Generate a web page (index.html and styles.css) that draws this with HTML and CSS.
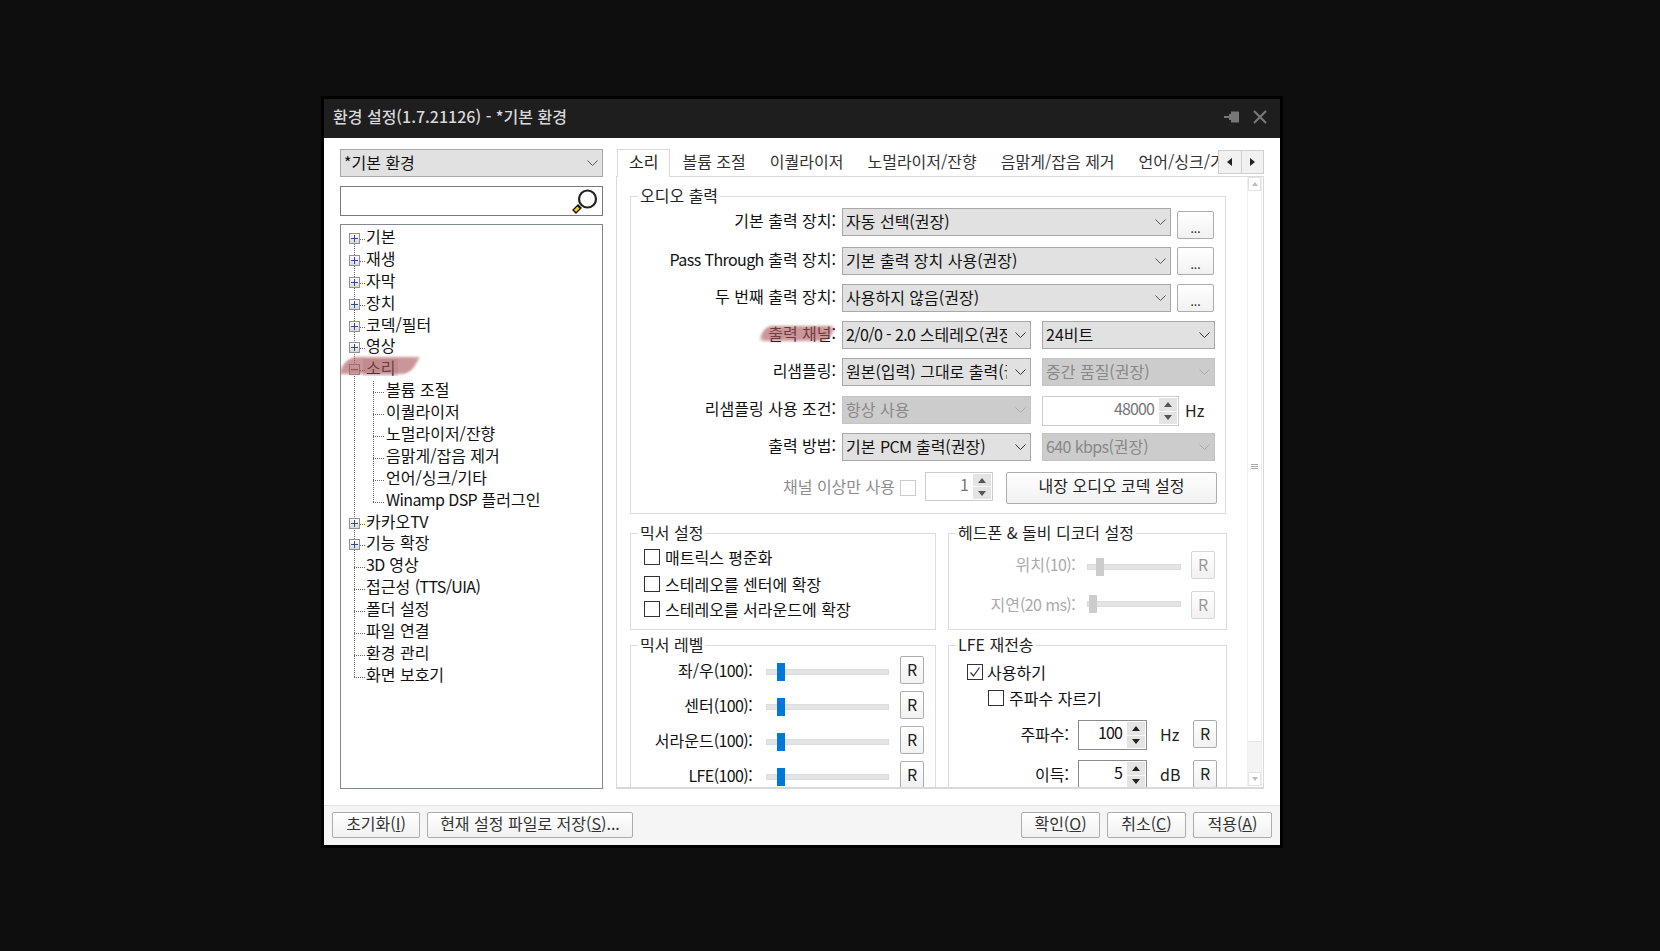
FILE: index.html
```html
<!DOCTYPE html>
<html lang="ko">
<head>
    <meta charset="UTF-8">
    <meta name="viewport" content="width=device-width, initial-scale=1.0">
    <title>환경 설정</title>
    <link rel="stylesheet" href="styles.css">
</head>
<body>

<div class="window">

    <header class="titlebar">
        <span class="title">환경 설정(1.7.21126) - *기본 환경</span>
        <svg class="pin" width="15" height="12" viewBox="0 0 15 12"><path d="M0 5h5V3h2V.5h8v11H7V9H5V7H0z" fill="#777"/></svg>
        <svg class="close" width="14" height="14" viewBox="0 0 14 14"><path d="M1 1l12 12M13 1L1 13" stroke="#777" stroke-width="2.200" fill="none"/></svg>
    </header>

    <div class="main">

        <!-- 왼쪽: 프로필, 검색, 트리 -->
        <div class="side">
            <div class="combo side-combo">
                <span class="combo-text">*기본 환경</span>
                <svg class="chev" width="11" height="6" viewBox="0 0 11 6"><path d="M.5.500l5 5 5-5" fill="none" stroke="#555"/></svg>
            </div>
            <div class="search">
                <svg width="26" height="25" viewBox="0 0 26 25">
                    <path d="M8 17l-6 6" stroke="#111" stroke-width="5.500" fill="none"/>
                    <path d="M6.500 18.500l-3.500 3.500" stroke="#f5cf00" stroke-width="3" fill="none"/>
                    <circle cx="15.500" cy="10" r="8.500" fill="#fff" stroke="#222" stroke-width="2.200"/>
                </svg>
            </div>
            <div class="tree">
                <ul class="tree-root">
                    <li class="node"><i class="exp"></i>기본</li>
                    <li class="node"><i class="exp"></i>재생</li>
                    <li class="node"><i class="exp"></i>자막</li>
                    <li class="node"><i class="exp"></i>장치</li>
                    <li class="node"><i class="exp"></i>코덱/필터</li>
                    <li class="node"><i class="exp"></i>영상</li>
                    <li class="node open"><i class="exp minus"></i><span class="selected">소리</span><span class="brush brush-tree"></span></li>
                    <li>
                        <ul class="tree-sub">
                            <li class="node">볼륨 조절</li>
                            <li class="node">이퀄라이저</li>
                            <li class="node">노멀라이저/잔향</li>
                            <li class="node">음맑게/잡음 제거</li>
                            <li class="node">언어/싱크/기타</li>
                            <li class="node"><span class="en">Winamp DSP</span> 플러그인</li>
                        </ul>
                    </li>
                    <li class="node"><i class="exp"></i>카카오<span class="en">TV</span></li>
                    <li class="node"><i class="exp"></i>기능 확장</li>
                    <li class="node"><span class="en">3D</span> 영상</li>
                    <li class="node">접근성 <span class="en">(TTS/UIA)</span></li>
                    <li class="node">폴더 설정</li>
                    <li class="node">파일 연결</li>
                    <li class="node">환경 관리</li>
                    <li class="node">화면 보호기</li>
                </ul>
            </div>
        </div>

        <!-- 오른쪽: 탭 -->
        <div class="content">
            <div class="tabs">
                <span class="tab active">소리</span>
                <span class="tab">볼륨 조절</span>
                <span class="tab">이퀄라이저</span>
                <span class="tab">노멀라이저/잔향</span>
                <span class="tab">음맑게/잡음 제거</span>
                <span class="tab">언어/싱크/기타</span>
                <div class="tab-scroll">
                    <span class="tab-btn"><i class="tri-left"></i></span>
                    <span class="tab-btn"><i class="tri-right"></i></span>
                </div>
            </div>

            <div class="pane">
                <div class="pane-body">

                    <div class="group audio">
                        <span class="group-title">오디오 출력</span>
                        <div class="audio-rows">
                            <div class="row">
                                <label class="lbl">기본 출력 장치:</label>
                                <div class="combo wide"><span class="combo-text">자동 선택(권장)</span><svg class="chev" width="11" height="6" viewBox="0 0 11 6"><path d="M.5.500l5 5 5-5" fill="none" stroke="#555"/></svg></div>
                                <button class="btn dots dots-low">...</button>
                            </div>
                            <div class="row">
                                <label class="lbl"><span class="en">Pass Through</span> 출력 장치:</label>
                                <div class="combo wide"><span class="combo-text">기본 출력 장치 사용(권장)</span><svg class="chev" width="11" height="6" viewBox="0 0 11 6"><path d="M.5.500l5 5 5-5" fill="none" stroke="#555"/></svg></div>
                                <button class="btn dots">...</button>
                            </div>
                            <div class="row">
                                <label class="lbl">두 번째 출력 장치:</label>
                                <div class="combo wide"><span class="combo-text">사용하지 않음(권장)</span><svg class="chev" width="11" height="6" viewBox="0 0 11 6"><path d="M.5.500l5 5 5-5" fill="none" stroke="#555"/></svg></div>
                                <button class="btn dots">...</button>
                            </div>
                            <div class="row">
                                <label class="lbl"><span class="brush brush-label"></span>출력 채널:</label>
                                <div class="combo half"><span class="combo-text"><span class="en">2/0/0 - 2.0</span> 스테레오(권장)</span><svg class="chev" width="11" height="6" viewBox="0 0 11 6"><path d="M.5.500l5 5 5-5" fill="none" stroke="#333"/></svg></div>
                                <div class="combo side-half"><span class="combo-text">24비트</span><svg class="chev" width="11" height="6" viewBox="0 0 11 6"><path d="M.5.500l5 5 5-5" fill="none" stroke="#333"/></svg></div>
                            </div>
                            <div class="row">
                                <label class="lbl">리샘플링:</label>
                                <div class="combo half"><span class="combo-text">원본(입력) 그대로 출력(권장)</span><svg class="chev" width="11" height="6" viewBox="0 0 11 6"><path d="M.5.500l5 5 5-5" fill="none" stroke="#333"/></svg></div>
                                <div class="combo side-half off"><span class="combo-text">중간 품질(권장)</span><svg class="chev" width="11" height="6" viewBox="0 0 11 6"><path d="M.5.500l5 5 5-5" fill="none" stroke="#aaa"/></svg></div>
                            </div>
                            <div class="row">
                                <label class="lbl">리샘플링 사용 조건:</label>
                                <div class="combo half off"><span class="combo-text">항상 사용</span><svg class="chev" width="11" height="6" viewBox="0 0 11 6"><path d="M.5.500l5 5 5-5" fill="none" stroke="#aaa"/></svg></div>
                                <div class="spin spin-rate off"><span class="spin-val">48000</span><span class="spin-btns"><i class="up"></i><i class="down"></i></span></div>
                                <span class="unit">Hz</span>
                            </div>
                            <div class="row">
                                <label class="lbl">출력 방법:</label>
                                <div class="combo half"><span class="combo-text">기본 <span class="en">PCM</span> 출력(권장)</span><svg class="chev" width="11" height="6" viewBox="0 0 11 6"><path d="M.5.500l5 5 5-5" fill="none" stroke="#333"/></svg></div>
                                <div class="combo side-half off"><span class="combo-text"><span class="en">640 kbps</span>(권장)</span><svg class="chev" width="11" height="6" viewBox="0 0 11 6"><path d="M.5.500l5 5 5-5" fill="none" stroke="#aaa"/></svg></div>
                            </div>
                            <div class="row">
                                <label class="lbl lbl-off">채널 이상만 사용</label>
                                <i class="check check-off"></i>
                                <div class="spin spin-ch off"><span class="spin-val">1</span><span class="spin-btns"><i class="up"></i><i class="down"></i></span></div>
                                <button class="btn codec">내장 오디오 코덱 설정</button>
                            </div>
                        </div>
                    </div>

                    <div class="group-grid">
                        <div class="group mixer">
                            <span class="group-title">믹서 설정</span>
                            <div class="check-row first"><i class="check"></i>매트릭스 평준화</div>
                            <div class="check-row second"><i class="check"></i>스테레오를 센터에 확장</div>
                            <div class="check-row third"><i class="check"></i>스테레오를 서라운드에 확장</div>
                        </div>

                        <div class="group phones">
                            <span class="group-title">헤드폰 &amp; 돌비 디코더 설정</span>
                            <div class="phone-row">
                                <label class="phone-lbl">위치<span class="en">(10):</span></label>
                                <div class="slider phone-slider"><i class="thumb gray pos-a"></i></div>
                                <button class="btn reset off">R</button>
                            </div>
                            <div class="phone-row">
                                <label class="phone-lbl">지연<span class="en">(20 ms):</span></label>
                                <div class="slider phone-slider raised"><i class="thumb gray pos-b"></i></div>
                                <button class="btn reset off">R</button>
                            </div>
                        </div>

                        <div class="group levels">
                            <span class="group-title">믹서 레벨</span>
                            <div class="level-row"><label class="level-lbl">좌/우<span class="en">(100):</span></label><div class="slider level-slider"><i class="thumb"></i></div><button class="btn reset">R</button></div>
                            <div class="level-row"><label class="level-lbl">센터<span class="en">(100):</span></label><div class="slider level-slider"><i class="thumb"></i></div><button class="btn reset">R</button></div>
                            <div class="level-row"><label class="level-lbl">서라운드<span class="en">(100):</span></label><div class="slider level-slider"><i class="thumb"></i></div><button class="btn reset">R</button></div>
                            <div class="level-row"><label class="level-lbl"><span class="en">LFE(100):</span></label><div class="slider level-slider"><i class="thumb"></i></div><button class="btn reset">R</button></div>
                        </div>

                        <div class="group lfe">
                            <span class="group-title">LFE 재전송</span>
                            <div class="check-row lfe-use"><i class="check on"><svg width="12" height="12" viewBox="0 0 12 12"><path d="M1.500 6.500l3 3.500 6-8.500" fill="none" stroke="#333" stroke-width="1.300"/></svg></i>사용하기</div>
                            <div class="check-row lfe-cut"><i class="check"></i>주파수 자르기</div>
                            <div class="lfe-row">
                                <label class="lfe-lbl">주파수:</label>
                                <div class="spin spin-lfe"><span class="spin-val">100</span><span class="spin-btns"><i class="up"></i><i class="down"></i></span></div>
                                <span class="unit lfe-unit">Hz</span>
                                <button class="btn reset">R</button>
                            </div>
                            <div class="lfe-row">
                                <label class="lfe-lbl">이득:</label>
                                <div class="spin spin-lfe"><span class="spin-val">5</span><span class="spin-btns"><i class="up"></i><i class="down"></i></span></div>
                                <span class="unit lfe-unit">dB</span>
                                <button class="btn reset">R</button>
                            </div>
                        </div>
                    </div>

                </div>

                <div class="scrollbar">
                    <span class="sb-arrow"><i class="sb-up"></i></span>
                    <span class="sb-thumb"><i class="sb-grip"></i></span>
                    <span class="sb-rest"></span>
                    <span class="sb-arrow"><i class="sb-down"></i></span>
                </div>
            </div>
        </div>
    </div>

    <footer class="footer">
        <button class="btn foot foot-reset">초기화(<u>I</u>)</button>
        <button class="btn foot foot-save">현재 설정 파일로 저장(<u>S</u>)...</button>
        <span class="foot-gap"></span>
        <button class="btn foot foot-act">확인(<u>O</u>)</button>
        <button class="btn foot foot-act">취소(<u>C</u>)</button>
        <button class="btn foot foot-act">적용(<u>A</u>)</button>
    </footer>

</div>

</body>
</html>
```

FILE: styles.css
```css
* {
    box-sizing: border-box;
}

body {
    margin: 0;
    padding: 96px 0 0 321px;
    height: 951px;
    overflow: hidden;
    background-color: #0e0e0e;
    font-family: "Noto Sans CJK KR", "Noto Sans", sans-serif;
    font-size: 16px;
    color: #111;
}

.en {
    letter-spacing: -0.6px;
}

.window {
    width: 962px;
    height: 752px;
    border: 3px solid #000;
    background-color: #fff;
    display: flex;
    flex-direction: column;
}

/* 제목 표시줄 */
.titlebar {
    height: 39px;
    flex: none;
    background-color: #1e1e1e;
    display: flex;
    align-items: center;
    padding: 0 13px 3px 9px;
}

.title {
    flex: 1;
    color: #d8d8d8;
    font-size: 16px;
    font-weight: 500;
    line-height: 20px;
    padding-bottom: 2px;
}

.pin {
    margin-right: 14px;
}

.main {
    flex: 1;
    display: flex;
    gap: 13px;
    padding: 11px 16px 0;
}

/* 왼쪽 */
.side {
    width: 263px;
    flex: none;
}

.combo {
    height: 28px;
    border: 1px solid #a8a8a8;
    background-color: #e1e1e1;
    display: flex;
    align-items: center;
    padding: 0 4px 0 3px;
    flex: none;
}

.combo-text {
    flex: 1;
    min-width: 0;
    overflow: hidden;
    white-space: nowrap;
    line-height: 24px;
    height: 26px;
}

.chev {
    flex: none;
    margin-left: 8px;
}

.combo.off {
    background-color: #ccc;
    border-color: #c4c4c4;
    color: #888;
}

.side-combo {
    width: 263px;
}

.search {
    height: 30px;
    margin-top: 9px;
    border: 1px solid #7a7a7a;
    display: flex;
    justify-content: flex-end;
    align-items: center;
    padding-right: 4px;
}

.tree {
    height: 565px;
    margin-top: 8px;
    border: 1px solid #828790;
    padding-top: 3px;
    overflow: hidden;
}

.tree ul {
    list-style: none;
    margin: 0;
    padding: 0;
    position: relative;
}

.tree-root::before {
    content: "";
    position: absolute;
    left: 13px;
    top: 11px;
    bottom: 11px;
    border-left: 1px dotted #666;
}

.tree-sub::before {
    content: "";
    position: absolute;
    left: 32px;
    top: 0;
    bottom: 11px;
    border-left: 1px dotted #666;
}

.node {
    height: 21.9px;
    line-height: 17px;
    padding-left: 25px;
    position: relative;
    white-space: nowrap;
}

.tree-sub .node {
    padding-left: 45px;
}

.node::after {
    content: "";
    position: absolute;
    left: 13px;
    top: 11px;
    width: 11px;
    border-top: 1px dotted #666;
}

.tree-sub .node::after {
    left: 32px;
}

.exp {
    position: absolute;
    left: 8px;
    top: 5px;
    width: 11px;
    height: 11px;
    border: 1px solid #919191;
    background: linear-gradient(#fff, #d8d8d8);
    z-index: 1;
}

.exp::before {
    content: "";
    position: absolute;
    left: 1px;
    top: 4px;
    width: 7px;
    height: 1px;
    background-color: #2d4a8a;
}

.exp::after {
    content: "";
    position: absolute;
    left: 4px;
    top: 1px;
    width: 1px;
    height: 7px;
    background-color: #2d4a8a;
}

.exp.minus::before {
    background-color: #555;
}

.exp.minus::after {
    display: none;
}

.selected {
    display: inline-block;
    background-color: #e6e6e6;
    margin-left: -3px;
    padding: 0 3px;
}

/* 붓으로 칠한 표시 */
.brush {
    position: absolute;
    background-color: rgba(170, 85, 90, 0.62);
    filter: blur(1.5px);
    z-index: 2;
    pointer-events: none;
}

.brush-tree {
    left: 2px;
    top: -2px;
    width: 72px;
    height: 17px;
    transform: skewX(-30deg);
    border-radius: 8px 3px 8px 3px;
}

.brush-label {
    right: 4px;
    top: 5px;
    width: 70px;
    height: 15px;
    transform: skewX(-25deg);
    border-radius: 6px;
}

/* 오른쪽 */
.content {
    width: 648px;
    flex: none;
}

.tabs {
    height: 28px;
    padding-left: 1px;
    display: flex;
    position: relative;
    overflow: hidden;
    white-space: nowrap;
}

.tab {
    padding: 0 12px;
    line-height: 22px;
    height: 27px;
    margin-top: 1px;
    color: #333;
    flex: none;
}

.tab.active {
    background-color: #fff;
    border: 1px solid #d9d9d9;
    border-bottom: none;
    height: 28px;
    color: #222;
    position: relative;
    z-index: 1;
    margin-top: 0;
    padding: 0 11px;
}

.tab-scroll {
    position: absolute;
    right: 0;
    top: 1px;
    width: 46px;
    height: 24px;
    display: flex;
    background-color: #fff;
    z-index: 2;
}

.tab-btn {
    flex: 1;
    border: 1px solid #cfcfcf;
    background-color: #f1f1f1;
    display: flex;
    align-items: center;
    justify-content: center;
}

.tab-btn + .tab-btn {
    border-left: none;
}

.tri-left {
    border: 4px solid transparent;
    border-left: none;
    border-right: 5px solid #222;
}

.tri-right {
    border: 4px solid transparent;
    border-right: none;
    border-left: 5px solid #222;
}

.pane {
    height: 613px;
    margin-top: -1px;
    border: 1px solid #d9d9d9;
    border-width: 1px 1px 2px;
    display: flex;
    overflow: hidden;
}

.pane-body {
    flex: 1;
    min-width: 0;
    padding: 19px 0 0 13px;
    overflow: hidden;
}

.scrollbar {
    width: 15px;
    flex: none;
    margin: 0 1px 1px 0;
    display: flex;
    flex-direction: column;
    border: 1px solid #eee;
    border-width: 0 1px;
}

.sb-arrow {
    height: 14px;
    flex: none;
    background-color: #fff;
    border: 1px solid #e4e4e4;
    display: flex;
    align-items: center;
    justify-content: center;
}

.sb-up {
    border: 3px solid transparent;
    border-top: none;
    border-bottom: 4px solid #bbb;
}

.sb-down {
    border: 3px solid transparent;
    border-bottom: none;
    border-top: 4px solid #bbb;
}

.sb-thumb {
    height: 551px;
    flex: none;
    background-color: #fff;
    border-bottom: 1px solid #e4e4e4;
    display: flex;
    align-items: center;
    justify-content: center;
}

.sb-grip {
    width: 7px;
    height: 5px;
    border-top: 1px solid #aaa;
    border-bottom: 1px solid #aaa;
    background: linear-gradient(#aaa, #aaa) center / 100% 1px no-repeat;
}

.sb-rest {
    flex: 1;
    background-color: #f4f4f4;
}

/* 그룹 상자 */
.group {
    border: 1px solid #dcdcdc;
}

.group-title {
    display: block;
    width: fit-content;
    height: 22px;
    line-height: 18px;
    margin: -11px 0 0 7px;
    padding: 0 2px;
    background-color: #fff;
    color: #222;
    white-space: nowrap;
}

.audio {
    width: 596px;
    height: 318px;
}

.audio-rows {
    display: grid;
    grid-template-rows: 39px 37px 37px 37px 38px 37px 39px 32px;
}

.row {
    display: flex;
    align-items: flex-start;
}

.lbl {
    width: 205px;
    margin-right: 6px;
    line-height: 24px;
    text-align: right;
    flex: none;
    position: relative;
    white-space: nowrap;
}

.lbl-off {
    width: 264px;
    margin-right: 5px;
    color: #8c8c8c;
    line-height: 26px;
    padding-top: 1px;
}

.wide {
    width: 329px;
}

.half {
    width: 189px;
}

.side-half {
    width: 173px;
    margin-left: 11px;
}

.btn {
    font-family: inherit;
    font-size: inherit;
    color: #222;
    background: linear-gradient(#fff, #f1f1f1);
    border: 1px solid #adadad;
    border-radius: 2px;
    padding: 0;
    white-space: nowrap;
}

.dots {
    width: 37px;
    height: 28px;
    margin-left: 6px;
    line-height: 32px;
    font-size: 12px;
}

.dots-low {
    margin-top: 3px;
}

.spin {
    height: 30px;
    border: 1px solid #8a8a8a;
    background-color: #fff;
    display: flex;
    align-items: stretch;
    flex: none;
}

.spin.off {
    border-color: #ccc;
    color: #777;
}

.spin-val {
    flex: 1;
    text-align: right;
    padding-right: 4px;
    line-height: 22px;
    letter-spacing: -0.9px;
}

.spin-btns {
    width: 18px;
    margin: 1px;
    display: flex;
    flex-direction: column;
    gap: 1px;
    flex: none;
}

.spin-btns i {
    flex: 1;
    background-color: #e4e4e4;
    display: flex;
    align-items: center;
    justify-content: center;
}

.spin-btns .up::before {
    content: "";
    border: 4px solid transparent;
    border-top: none;
    border-bottom: 5px solid #222;
}

.spin-btns .down::before {
    content: "";
    border: 4px solid transparent;
    border-bottom: none;
    border-top: 5px solid #222;
}

.off .spin-btns .up::before {
    border-bottom-color: #555;
}

.off .spin-btns .down::before {
    border-top-color: #555;
}

.spin-rate {
    width: 137px;
    margin-left: 11px;
}

.spin-ch {
    width: 68px;
    height: 29px;
    margin-left: 9px;
}

.unit {
    margin-left: 6px;
    line-height: 28px;
    color: #222;
}

.codec {
    width: 211px;
    height: 32px;
    margin-left: 13px;
    padding-bottom: 6px;
}

.check {
    display: inline-flex;
    width: 16px;
    height: 16px;
    border: 1px solid #333;
    background-color: #fff;
    margin-right: 5px;
    flex: none;
    align-items: center;
    justify-content: center;
}

.check-off {
    border-color: #ccc;
    margin: 8px 0 0;
}

.group-grid {
    display: grid;
    grid-template-columns: 306px 279px;
    column-gap: 12px;
    margin-top: 19px;
}

.mixer,
.phones {
    height: 97px;
}

.levels,
.lfe {
    height: 200px;
    margin-top: 15px;
}

.check-row {
    display: flex;
    align-items: center;
    height: 20px;
    line-height: 18px;
    white-space: nowrap;
}

.mixer .check-row {
    padding-left: 13px;
}

.check-row.first {
    margin-top: 2px;
}

.check-row.second {
    margin-top: 6.500px;
}

.check-row.third {
    margin-top: 5px;
}

.phone-row {
    display: flex;
    align-items: flex-start;
    height: 28px;
    margin-bottom: 12px;
}

.phones .phone-row:first-of-type {
    margin-top: 6px;
}

.phone-lbl {
    width: 126px;
    text-align: right;
    color: #aaa;
    line-height: 26px;
    flex: none;
    white-space: nowrap;
}

.slider {
    height: 6px;
    margin-top: 13px;
    border: 1px solid #dcdcdc;
    background-color: #e4e4e4;
    position: relative;
    flex: none;
}

.slider.raised {
    margin-top: 10px;
}

.thumb {
    position: absolute;
    top: -7px;
    left: 10px;
    width: 8px;
    height: 18px;
    background-color: #0078d7;
}

.thumb.gray {
    background-color: #ccc;
}

.thumb.pos-a {
    left: 8px;
}

.thumb.pos-b {
    left: 1px;
}

.phone-slider {
    width: 94px;
    margin-left: 12px;
}

.reset {
    width: 24px;
    height: 28px;
    padding-bottom: 2px;
    flex: none;
}

.reset.off {
    border-color: #d6d6d6;
    color: #999;
}

.phone-row .reset {
    margin-left: 10px;
}

.level-row {
    display: flex;
    align-items: flex-start;
    height: 28px;
    margin-bottom: 7px;
}

.levels .group-title {
    margin-bottom: -1px;
}

.level-lbl {
    width: 121px;
    text-align: right;
    line-height: 28px;
    flex: none;
    white-space: nowrap;
}

.level-slider {
    width: 123px;
    margin-left: 14px;
    margin-top: 13px;
}

.level-row .reset {
    margin-left: 11px;
}

.lfe-use {
    padding-left: 18px;
    margin-top: 5px;
}

.lfe-use .check {
    margin-right: 4px;
}

.lfe-cut {
    padding-left: 39px;
    margin-top: 6px;
}

.lfe-row {
    display: flex;
    align-items: flex-start;
    height: 30px;
    margin-top: 0;
    margin-bottom: 10px;
}

.lfe-cut + .lfe-row {
    margin-top: 12px;
}

.lfe-lbl {
    width: 120px;
    text-align: right;
    line-height: 28px;
    flex: none;
}

.spin-lfe {
    width: 69px;
    margin-left: 9px;
}

.lfe-unit {
    width: 33px;
    margin-left: 13px;
    flex: none;
    line-height: 28px;
}

/* 아래 버튼 줄 */
.footer {
    height: 40px;
    flex: none;
    background-color: #f5f5f5;
    border-top: 1px solid #e2e2e2;
    display: flex;
    align-items: flex-start;
    gap: 7px;
    padding: 6px 8px 0;
}

.foot {
    height: 26px;
    line-height: 18px;
    padding-bottom: 4px;
    color: #333;
}

.foot-reset {
    width: 88px;
}

.foot-save {
    width: 206px;
}

.foot-act {
    width: 79px;
}

.foot-gap {
    flex: 1;
}
```
